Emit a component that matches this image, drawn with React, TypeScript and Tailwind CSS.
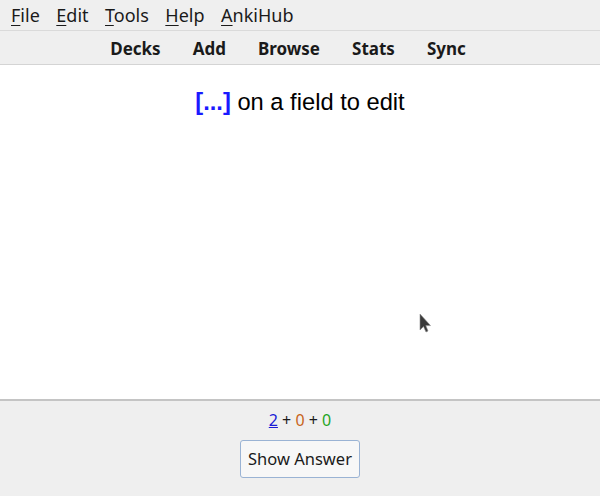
import React from 'react';

const menus = [
  { key: 'F', rest: 'ile' },
  { key: 'E', rest: 'dit' },
  { key: 'T', rest: 'ools' },
  { key: 'H', rest: 'elp' },
  { key: 'A', rest: 'nkiHub' },
];

const tabs = ['Decks', 'Add', 'Browse', 'Stats', 'Sync'];

const App: React.FC = () => {
  return (
    <div className="flex flex-col w-[600px] h-[496px] bg-[#efefef] font-['Noto_Sans',sans-serif] text-[#1a1a1a] overflow-hidden">
      <div className="flex items-center h-[31px] pl-[11px] gap-[16.5px] text-[18px] border-b border-[#dadada]">
        {menus.map((m) => (
          <span key={m.key}>
            <span className="underline underline-offset-[3px]">{m.key}</span>
            {m.rest}
          </span>
        ))}
      </div>
      <div className="flex items-center justify-center h-[34px] gap-[32px] pr-[24px] pt-[2px] text-[17px] font-bold border-b border-[#d4d4d4]">
        {tabs.map((t) => (
          <span key={t}>{t}</span>
        ))}
      </div>
      <div className="relative flex-1 bg-white border-b-2 border-[#c4c4c4]">
        <p className="pt-[21px] text-center text-[23.7px] leading-[32px] font-['Liberation_Sans',Arial,sans-serif] text-black">
          <span className="font-bold text-[#1a1aff]">[...]</span> on a field to edit
        </p>
        <svg className="absolute left-[419px] top-[248px]" width="14" height="22" viewBox="0 0 14 22">
          <path d="M1 1 L1 17 L4.5 13.5 L7 19 L9 18 L6.8 12.6 L11.5 12.6 Z" fill="#3a3a3a" stroke="#8a8a8a" strokeWidth="0.6" />
        </svg>
      </div>
      <div className="flex flex-col items-center h-[95px]">
        <div className="mt-[8px] text-[16px] leading-[22px]">
          <span className="text-[#1a1ad6] underline">2</span>
          <span> + </span>
          <span className="text-[#c8641a]">0</span>
          <span> + </span>
          <span className="text-[#1fa51f]">0</span>
        </div>
        <button className="mt-[9px] h-[38px] px-[7px] pt-[1px] text-[16.5px] text-[#1a1a1a] bg-[#f7f7f7] border border-[#9ab3d4] rounded-[3px]">
          Show Answer
        </button>
      </div>
    </div>
  );
};

export default App;
